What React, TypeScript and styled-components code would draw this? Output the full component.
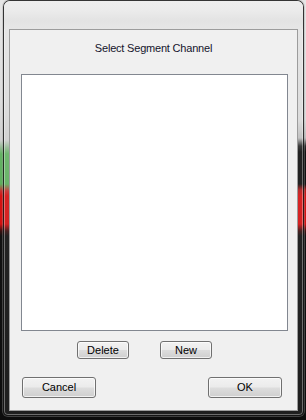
import React from 'react';
import styled, { createGlobalStyle } from 'styled-components';

const GlobalStyle = createGlobalStyle`
  html, body {
    margin: 0;
    padding: 0;
    background: #0c0c0c;
  }
  body {
    font-family: Tahoma, 'Liberation Sans', Arial, sans-serif;
  }
`;

const leftStripes = `linear-gradient(to bottom,
  #e6e6e6 0px, #dcdcdc 100px, #cfcfcf 140px, #8fb88f 148px,
  #64b264 154px, #5dae5d 184px, #c63030 191px, #d41212 196px,
  #d21010 224px, #3a1010 231px, #111111 236px, #0c0c0c 420px)`;

const rightStripes = `linear-gradient(to bottom,
  #e6e6e6 0px, #dadada 120px, #bdbdbd 138px, #2a2a2a 146px,
  #101010 152px, #101010 184px, #b01a1a 190px, #d41212 196px,
  #d21010 224px, #3a1010 231px, #111111 236px, #0c0c0c 420px)`;

const Backdrop = styled.div`
  width: 306px;
  height: 420px;
  box-sizing: border-box;
  padding: 0 2px 0 3px;
  background:
    ${leftStripes} left top / 50% 100% no-repeat,
    ${rightStripes} right top / 50% 100% no-repeat;
`;

const Window = styled.div`
  width: 301px;
  height: 416px;
  box-sizing: border-box;
  border: 1px solid rgba(20, 20, 20, 0.85);
  border-radius: 7px 7px 5px 5px;
  box-shadow:
    inset 0 0 0 1px rgba(255, 255, 255, 0.35),
    0 0 0 1px rgba(160, 160, 160, 0.35);
  display: flex;
  flex-direction: column;
  overflow: hidden;
  background: rgba(255, 255, 255, 0.08);
`;

const TitleBar = styled.div`
  height: 28px;
  flex: none;
  background: linear-gradient(
    to bottom,
    #eeeeee 0%,
    #ebebeb 35%,
    #e3e3e3 70%,
    #e6e6e6 100%
  );
`;

const Body = styled.div`
  flex: 1;
  display: flex;
  padding: 0 5px 4px 5px;
`;

const Client = styled.div`
  flex: 1;
  display: flex;
  flex-direction: column;
  background: #f0f0f0;
  border: 1px solid #9c9c9c;
`;

const Heading = styled.div`
  padding-top: 11px;
  height: 14px;
  line-height: 14px;
  margin-bottom: 19px;
  text-align: center;
  font-size: 11px;
  letter-spacing: -0.2px;
  color: #14142c;
`;

const ListBox = styled.div`
  height: 257px;
  box-sizing: border-box;
  margin: 0 9px 0 11px;
  background: #ffffff;
  border: 1px solid #828790;
`;

const ButtonRow = styled.div<{ $top: number; $spread?: boolean }>`
  display: flex;
  margin-top: ${(p) => p.$top}px;
  padding: ${(p) => (p.$spread ? '0 15px 0 12px' : '0 0 0 67px')};
  justify-content: ${(p) => (p.$spread ? 'space-between' : 'flex-start')};
  gap: 31px;
`;

const Button = styled.button<{ $w: number; $h: number }>`
  width: ${(p) => p.$w}px;
  height: ${(p) => p.$h}px;
  box-sizing: border-box;
  padding: 0;
  margin: 0;
  border: 1px solid #707070;
  border-radius: 3px;
  background: linear-gradient(
    to bottom,
    #f2f2f2 0%,
    #ebebeb 48%,
    #dddddd 52%,
    #cfcfcf 100%
  );
  box-shadow: inset 0 0 0 1px rgba(255, 255, 255, 0.7);
  font-family: Tahoma, 'Liberation Sans', Arial, sans-serif;
  font-size: 11px;
  color: #000000;
  line-height: 1;
`;

export default function App() {
  return (
    <>
      <GlobalStyle />
      <Backdrop>
        <Window>
          <TitleBar />
          <Body>
            <Client>
              <Heading>Select Segment Channel</Heading>
              <ListBox />
              <ButtonRow $top={10}>
                <Button $w={52} $h={18}>Delete</Button>
                <Button $w={52} $h={18}>New</Button>
              </ButtonRow>
              <ButtonRow $top={18} $spread>
                <Button $w={74} $h={21}>Cancel</Button>
                <Button $w={74} $h={21}>OK</Button>
              </ButtonRow>
            </Client>
          </Body>
        </Window>
      </Backdrop>
    </>
  );
}
